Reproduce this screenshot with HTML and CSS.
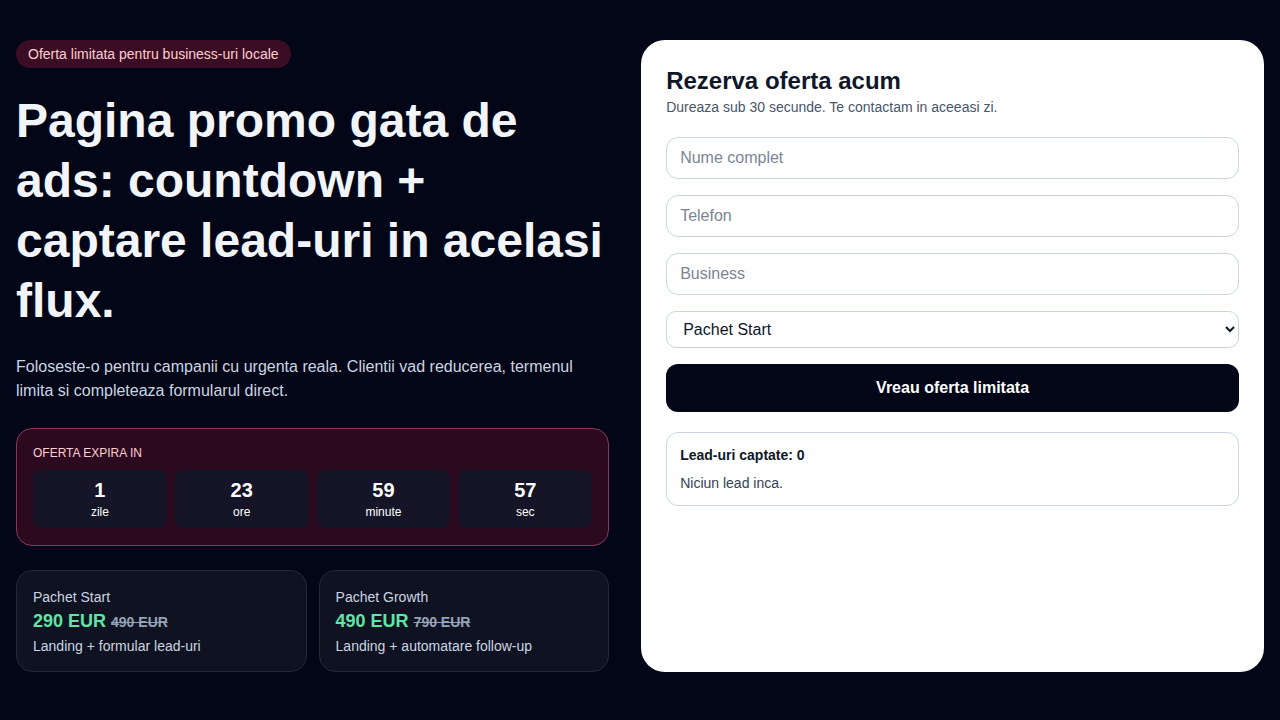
FILE: index.html
```html
<!DOCTYPE html>
<html lang="ro">
  <head>
    <meta charset="UTF-8">
    <meta name="viewport" content="width=device-width, initial-scale=1.0">
    <title>Oferta limitata - landing promo</title>

    <link rel="stylesheet" href="styles.css">
  </head>

  <body>
    <main class="page">
      <section class="hero">
        <span class="badge">Oferta limitata pentru business-uri locale</span>
        <h1>Pagina promo gata de ads: countdown + captare lead-uri in acelasi flux.</h1>
        <p class="lead">Foloseste-o pentru campanii cu urgenta reala. Clientii vad reducerea, termenul limita si completeaza formularul direct.</p>

        <div class="countdown">
          <div class="countdown-label">OFERTA EXPIRA IN</div>
          <div class="countdown-grid">
            <div class="cell"><strong id="cd-days">1</strong><span>zile</span></div>
            <div class="cell"><strong id="cd-hours">23</strong><span>ore</span></div>
            <div class="cell"><strong id="cd-minutes">59</strong><span>minute</span></div>
            <div class="cell"><strong id="cd-seconds">57</strong><span>sec</span></div>
          </div>
        </div>

        <div class="plans">
          <div class="plan">
            <div class="plan-name">Pachet Start</div>
            <div class="plan-price">290 EUR <s>490 EUR</s></div>
            <div class="plan-desc">Landing + formular lead-uri</div>
          </div>
          <div class="plan">
            <div class="plan-name">Pachet Growth</div>
            <div class="plan-price">490 EUR <s>790 EUR</s></div>
            <div class="plan-desc">Landing + automatare follow-up</div>
          </div>
        </div>
      </section>

      <section class="card">
        <h2>Rezerva oferta acum</h2>
        <p class="card-sub">Dureaza sub 30 secunde. Te contactam in aceeasi zi.</p>

        <form class="lead-form" id="lead-form">
          <input type="text" placeholder="Nume complet">
          <input type="tel" placeholder="Telefon">
          <input type="text" placeholder="Business">
          <select>
            <option>Pachet Start</option>
            <option>Pachet Growth</option>
          </select>
          <button type="submit">Vreau oferta limitata</button>
        </form>

        <div class="leads">
          <div class="leads-count">Lead-uri captate: <span id="lead-count">0</span></div>
          <div class="leads-empty">Niciun lead inca.</div>
        </div>
      </section>
    </main>
  </body>
</html>
```

FILE: styles.css
```css
* {
  box-sizing: border-box;
}

body {
  margin: 0;
  background: #020617;
  color: #f1f5f9;
  font-family: 'Liberation Sans', Arial, sans-serif;
}

.page {
  display: grid;
  grid-template-columns: 1fr 1.05fr;
  align-items: stretch;
  gap: 32px;
  padding: 40px 16px;
}

/* left column */
.badge {
  display: inline-block;
  padding: 6px 12px;
  border-radius: 999px;
  background: #3b0d24;
  color: #fecdd3;
  font-size: 14px;
  line-height: 16px;
}

h1 {
  margin: 23px 0 24px;
  font-size: 48px;
  line-height: 60px;
  font-weight: 700;
}

.lead {
  margin: 0 0 25px;
  color: #cbd5e1;
  font-size: 16px;
  line-height: 24px;
}

.countdown {
  padding: 16px 16px 17px;
  border: 1px solid #87385a;
  border-radius: 16px;
  background: #2b0a20;
}

.countdown-label {
  color: #fecdd3;
  font-size: 12px;
  line-height: 16px;
  margin-bottom: 9px;
}

.countdown-grid {
  display: grid;
  grid-template-columns: repeat(4, 1fr);
  gap: 8px;
}

.cell {
  display: flex;
  flex-direction: column;
  align-items: center;
  padding: 8px 0 6px;
  border-radius: 8px;
  background: #161427;
  color: #fff;
}

.cell strong {
  font-size: 20px;
  line-height: 24px;
}

.cell span {
  font-size: 12px;
  line-height: 20px;
}

.plans {
  display: grid;
  grid-template-columns: 1fr 1fr;
  gap: 12px;
  margin-top: 24px;
}

.plan {
  padding: 16px 16px 15px;
  border: 1px solid #232838;
  border-radius: 16px;
  background: #0f1221;
}

.plan-name,
.plan-desc {
  color: #cbd5e1;
  font-size: 14px;
  line-height: 20px;
}

.plan-price {
  margin: 2px 0 2px;
  color: #5ee6a6;
  font-size: 18px;
  line-height: 24px;
  font-weight: 700;
}

.plan-price s {
  color: #94a3b8;
  font-size: 14px;
}

/* right column */
.card {
  padding: 26px 25px 25px;
  border-radius: 24px;
  background: #fff;
  color: #0f172a;
}

h2 {
  margin: 0;
  font-size: 24px;
  line-height: 30px;
}

.card-sub {
  margin: 1px 0 20px;
  color: #475569;
  font-size: 14px;
  line-height: 20px;
}

.lead-form {
  display: flex;
  flex-direction: column;
  gap: 16px;
}

.lead-form input,
.lead-form select {
  width: 100%;
  border: 1px solid #cbd5e1;
  border-radius: 12px;
  background: #fff;
  color: #0f172a;
  font-family: inherit;
  font-size: 16px;
}

.lead-form input {
  height: 42px;
  padding: 0 13px;
}

.lead-form input::placeholder {
  color: #7c8596;
}

.lead-form select {
  height: 37px;
  padding: 0 12px;
  border-radius: 10px;
}

.lead-form button {
  height: 48px;
  border: 0;
  border-radius: 12px;
  background: #020617;
  color: #fff;
  font-family: inherit;
  font-size: 16px;
  font-weight: 700;
  cursor: pointer;
}

.leads {
  margin-top: 20px;
  padding: 12px 13px;
  border: 1px solid #cbd5e1;
  border-radius: 12px;
  font-size: 14px;
  line-height: 20px;
}

.leads-count {
  font-weight: 700;
  margin-bottom: 8px;
}

.leads-empty {
  color: #334155;
}
```
